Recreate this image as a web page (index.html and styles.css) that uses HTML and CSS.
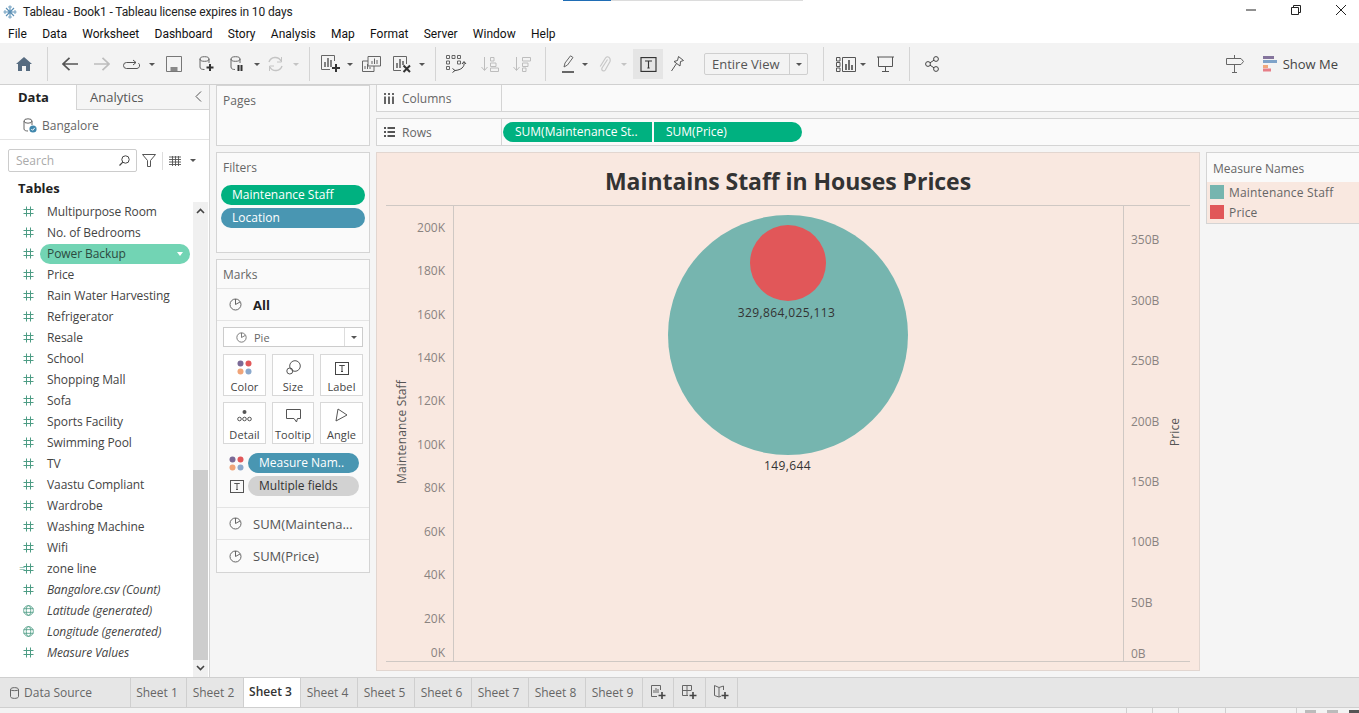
FILE: index.html
```html
<!DOCTYPE html>
<html>
<head>
    <title>Tableau - Book1</title>
    <link rel="stylesheet" href="styles.css">
</head>
<body>
    <!-- shared icons -->
    <svg class="defs" width="0" height="0">
        <symbol id="i-hash" viewBox="0 0 11 11"><path d="M3.5 0.5V10.5M7.5 0.5V10.5M0.5 3.5H10.5M0.5 7.5H10.5" fill="none" stroke="currentColor"/></symbol>
        <symbol id="i-globe" viewBox="0 0 12 12"><g fill="none" stroke="currentColor" stroke-width="0.9"><circle cx="6" cy="6" r="5.3"/><ellipse cx="6" cy="6" rx="2.4" ry="5.3"/><path d="M0.7 4H11.3M0.7 8H11.3"/></g></symbol>
        <symbol id="i-pie" viewBox="0 0 13 13"><g fill="none" stroke="currentColor"><circle cx="6.5" cy="6.5" r="5.5"/><path d="M6.5 1V6.5L11 4"/></g></symbol>
        <symbol id="i-dots" viewBox="0 0 15 15"><circle cx="3.5" cy="3.5" r="3" fill="#7b6a96"/><circle cx="11.5" cy="3.5" r="3" fill="#e15759"/><circle cx="3.5" cy="11.5" r="3" fill="#f0a478"/><circle cx="11.5" cy="11.5" r="3" fill="#8aa8cc"/></symbol>
        <symbol id="i-t" viewBox="0 0 14 13"><rect x="0.5" y="0.5" width="13" height="12" fill="none" stroke="currentColor"/><path d="M4.5 4V3.5H9.5V4M7 3.5V9.5M6 9.5H8" fill="none" stroke="currentColor"/></symbol>
    </svg>

    <header class="titlebar">
        <svg class="app-icon" width="14" height="14" viewBox="0 0 14 14"><g fill="none" stroke="#5a8fb5" stroke-width="1.1"><path d="M7 0.5V13.5M0.5 7H13.5M3 3L11 11M11 3L3 11"/><path d="M5 2H9M5 12H9M2 5V9M12 5V9" stroke="#7fa9c7"/></g></svg>
        <span class="app-title">Tableau - Book1 - Tableau license expires in 10 days</span>
        <div class="win-controls">
            <svg width="10" height="10" viewBox="0 0 10 10"><path d="M0 5H10" stroke="#222"/></svg>
            <svg width="10" height="10" viewBox="0 0 10 10"><path d="M0.5 2.5H7.5V9.5H0.5ZM2.5 2.5V0.5H9.5V7.5H7.5" fill="none" stroke="#222"/></svg>
            <svg width="10" height="10" viewBox="0 0 10 10"><path d="M0 0L10 10M10 0L0 10" stroke="#222"/></svg>
        </div>
        <div class="loading-strip"><span></span></div>
    </header>

    <nav class="menubar">
        <span>File</span><span>Data</span><span>Worksheet</span><span>Dashboard</span><span>Story</span><span>Analysis</span><span>Map</span><span>Format</span><span>Server</span><span>Window</span><span>Help</span>
    </nav>

    <div class="toolbar">
        <svg class="m16" width="16" height="14" viewBox="0 0 16 14"><path d="M8 0L16 7H14V14H10V9H6V14H2V7H0Z" fill="#566b80"/></svg>
        <i class="sep m15"></i>
        <svg class="m14" width="16" height="14" viewBox="0 0 16 14"><path d="M1 7H16M7.5 0.8L1 7L7.5 13.2" fill="none" stroke="#555" stroke-width="1.7"/></svg>
        <svg class="m16" width="16" height="14" viewBox="0 0 16 14"><path d="M0 7H15M8.5 0.8L15 7L8.5 13.2" fill="none" stroke="#bdbdbd" stroke-width="1.7"/></svg>
        <svg class="m13" width="18" height="11" viewBox="0 0 18 11"><path d="M3.5 3.5H13M3.5 3.5A3 3 0 0 0 3.5 9.5H14A3 3 0 0 0 15.5 4.2M10 1L13 3.5L10 6" fill="none" stroke="#555"/></svg>
        <i class="caret m8"></i>
        <svg class="m11" width="16" height="16" viewBox="0 0 16 16"><path d="M0.5 0.5H15.5V15.5H0.5Z" fill="none" stroke="#777"/><rect x="4.5" y="11" width="7" height="4" fill="#888"/></svg>
        <svg class="m17" width="15" height="16" viewBox="0 0 15 16"><g fill="none" stroke="#666"><ellipse cx="5.5" cy="3" rx="4.5" ry="2.3"/><path d="M1 3V11C1 13 3 13.5 5.5 13.5M10 3V7"/></g><path d="M11 8V15M7.5 11.5H14.5" stroke="#333" stroke-width="2"/></svg>
        <svg class="m16" width="14" height="16" viewBox="0 0 14 16"><g fill="none" stroke="#666"><ellipse cx="5.5" cy="3" rx="4.5" ry="2.3"/><path d="M1 3V11C1 13 3 13.5 5 13.5M10 3V7"/></g><path d="M8.5 9V15M11.5 9V15" stroke="#333" stroke-width="2"/></svg>
        <i class="caret m10"></i>
        <svg class="m7" width="17" height="16" viewBox="0 0 17 16"><path d="M2 6A6.5 6.5 0 0 1 14 5M15 10A6.5 6.5 0 0 1 3 11" fill="none" stroke="#c4c4c4" stroke-width="1.4"/><path d="M14.5 1V6H10M2.5 15V10H7" fill="none" stroke="#c4c4c4"/></svg>
        <i class="caret caret-off m9"></i>
        <i class="sep m10"></i>
        <svg class="m11" width="19" height="18" viewBox="0 0 19 18"><path d="M13.5 6V0.5H0.5V14.5H9" fill="none" stroke="#666"/><path d="M4 12V7M7 12V3M10 12V5" stroke="#666" stroke-width="1.6"/><path d="M15 9V17M11 13H19" stroke="#333" stroke-width="2"/></svg>
        <i class="caret m7"></i>
        <svg class="m9" width="19" height="16" viewBox="0 0 19 16"><g fill="none" stroke="#666"><path d="M6 10V0.5H18.5V10H6Z"/><path d="M6 5H0.5V15.5H12V10"/><path d="M10 8V5M12.5 8V2.5M15 8V4M3 13V10M5.5 13V8M8 13V11"/></g></svg>
        <svg class="m12" width="18" height="17" viewBox="0 0 18 17"><path d="M13.5 8V0.5H0.5V14.5H8" fill="none" stroke="#666"/><path d="M4 12V7M7 12V3M10 9V5" stroke="#666" stroke-width="1.6"/><path d="M10.5 9.5L17 16M17 9.5L10.5 16" stroke="#333" stroke-width="2"/></svg>
        <i class="caret m8"></i>
        <i class="sep m10"></i>
        <svg class="m10" width="21" height="18" viewBox="0 0 21 18"><g fill="none" stroke="#666"><path d="M0.5 0.5H3.5V3.5H0.5ZM6 0.5H9V3.5H6ZM11.5 0.5H14.5V3.5H11.5ZM0.5 6H3.5V9H0.5ZM0.5 11.5H3.5V14.5H0.5ZM11.5 6H14.5V9H11.5Z"/><path d="M18 7C19 12 15 15 9 15.5M6.5 13.5L9 15.5L6.5 17.5M16 9L18 6.5L20 9" stroke="#444"/></g></svg>
        <svg class="m14" width="18" height="16" viewBox="0 0 18 16"><g fill="none" stroke="#bdbdbd"><path d="M3.5 1V14M0.5 11L3.5 14.5L6.5 11"/><path d="M9.5 1.5H13V5H9.5ZM9.5 7H15V10.5H9.5ZM9.5 12H17.5V15.5H9.5Z"/></g></svg>
        <svg class="m14" width="18" height="16" viewBox="0 0 18 16"><g fill="none" stroke="#bdbdbd"><path d="M3.5 1V14M0.5 11L3.5 14.5L6.5 11"/><path d="M9.5 1.5H17.5V5H9.5ZM9.5 7H15V10.5H9.5ZM9.5 12H13V15.5H9.5Z"/></g></svg>
        <i class="sep m14"></i>
        <svg class="m16" width="12" height="18" viewBox="0 0 12 18"><path d="M2 12L3 8L8.5 0.8L11 2.5L5.5 10Z" fill="none" stroke="#666"/><path d="M0 17H12" stroke="#444" stroke-width="1.6"/></svg>
        <i class="caret m8"></i>
        <svg class="m11" width="12" height="18" viewBox="0 0 12 18"><path d="M8.5 4.5L3 13C2 15.5 5 17 6.3 15L11 6.5C12 3 8.5 0 6.5 3L1.2 11.5" fill="none" stroke="#c8c8c8" stroke-width="1.2"/></svg>
        <i class="caret caret-off m10"></i>
        <div class="tool-on m6">
            <svg width="17" height="15"><use href="#i-t"/></svg>
        </div>
        <svg class="m8" width="13" height="16" viewBox="0 0 13 16"><path d="M7.5 0.5L12.5 4.5L9.5 5.5L9 10L3 5.5L6.5 4.5ZM5.5 7.5L0.5 15" fill="none" stroke="#555"/></svg>
        <div class="fit-select m20">
            <span class="fit-text">Entire View</span>
            <span class="fit-arrow"><i class="caret"></i></span>
        </div>
        <i class="sep m15"></i>
        <svg class="m12" width="20" height="15" viewBox="0 0 20 15"><g fill="none" stroke="#555"><path d="M0.5 0.5H4V4H0.5ZM0.5 5.5H4V9.5H0.5ZM0.5 11H4V14.5H0.5ZM6.5 0.5H19.5V14.5H6.5Z"/></g><path d="M10 13V7M13 13V3M16 13V8" stroke="#555" stroke-width="1.7"/></svg>
        <i class="caret m4"></i>
        <svg class="m11" width="17" height="16" viewBox="0 0 17 16"><path d="M0 1H17M1.5 1V10.5H15.5V1M8.5 10.5V15.5M5 15.5H12" fill="none" stroke="#555"/></svg>
        <i class="sep m15"></i>
        <svg class="m15" width="14" height="16" viewBox="0 0 14 16"><g fill="none" stroke="#444"><circle cx="11" cy="3" r="2.4"/><circle cx="3" cy="8" r="2.4"/><circle cx="11" cy="13" r="2.4"/><path d="M5 6.8L9 4.2M5 9.2L9 11.8"/></g></svg>
        <div class="toolbar-right">
            <svg width="18" height="18" viewBox="0 0 18 18"><path d="M0.5 3.5H15L17.5 6.5L15 9.5H0.5ZM8.5 0V3.5M8.5 9.5V17.5M6 17.5H11" fill="none" stroke="#666"/></svg>
            <svg class="showme-icon" width="14" height="16" viewBox="0 0 14 16"><rect width="11" height="3" fill="#84749c"/><rect y="4" width="14" height="3" fill="#7fa3c9"/><rect y="9" width="5" height="3" fill="#f1a77c"/><rect y="12.5" width="8" height="3" fill="#e77e87"/></svg>
            <span class="showme-text">Show Me</span>
        </div>
    </div>

    <main class="workspace">
        <aside class="sidebar">
            <div class="side-tabs">
                <div class="side-tab side-tab-on">Data</div>
                <div class="side-tab">Analytics<svg class="side-collapse" width="7" height="11" viewBox="0 0 7 11"><path d="M6 0.5L1 5.5L6 10.5" fill="none" stroke="#555"/></svg></div>
            </div>
            <div class="source-row">
                <svg width="14" height="15" viewBox="0 0 14 15"><g fill="none" stroke="#666"><ellipse cx="5" cy="3" rx="4" ry="2.2"/><path d="M1 3V11C1 12.5 3 13 5 13M9 3V7"/></g><circle cx="10" cy="11" r="3.6" fill="#3f87ad"/><path d="M8.3 11L9.6 12.3L11.8 9.8" fill="none" stroke="#fff"/></svg>
                <span>Bangalore</span>
            </div>
            <div class="search-row">
                <div class="search-box">
                    <span>Search</span>
                    <svg width="11" height="11" viewBox="0 0 11 11"><circle cx="6.5" cy="4.5" r="3.7" fill="none" stroke="#444"/><path d="M3.8 7.2L0.5 10.5" stroke="#444" stroke-width="1.2"/></svg>
                </div>
                <svg class="search-funnel" width="14" height="13" viewBox="0 0 14 13"><path d="M0.5 0.5H13.5L8.5 6.5V12.5H5.5V6.5Z" fill="none" stroke="#555"/></svg>
                <i class="search-sep"></i>
                <svg width="12" height="10" viewBox="0 0 12 10"><path d="M0 1H12M0 3.5H12M0 6H12M0 8.5H12M3.5 0V10M6.5 0V10M9.5 0V10" fill="none" stroke="#555" stroke-width="0.9"/></svg>
                <i class="caret search-caret"></i>
            </div>
            <div class="tables-head">Tables</div>
            <div class="field-area">
                <ul class="field-list">
                    <li class="field"><svg class="f-ic"><use href="#i-hash"/></svg><span>Multipurpose Room</span></li>
                    <li class="field"><svg class="f-ic"><use href="#i-hash"/></svg><span>No. of Bedrooms</span></li>
                    <li class="field field-on"><svg class="f-ic"><use href="#i-hash"/></svg><span>Power Backup<i class="caret caret-white"></i></span></li>
                    <li class="field"><svg class="f-ic"><use href="#i-hash"/></svg><span>Price</span></li>
                    <li class="field"><svg class="f-ic"><use href="#i-hash"/></svg><span>Rain Water Harvesting</span></li>
                    <li class="field"><svg class="f-ic"><use href="#i-hash"/></svg><span>Refrigerator</span></li>
                    <li class="field"><svg class="f-ic"><use href="#i-hash"/></svg><span>Resale</span></li>
                    <li class="field"><svg class="f-ic"><use href="#i-hash"/></svg><span>School</span></li>
                    <li class="field"><svg class="f-ic"><use href="#i-hash"/></svg><span>Shopping Mall</span></li>
                    <li class="field"><svg class="f-ic"><use href="#i-hash"/></svg><span>Sofa</span></li>
                    <li class="field"><svg class="f-ic"><use href="#i-hash"/></svg><span>Sports Facility</span></li>
                    <li class="field"><svg class="f-ic"><use href="#i-hash"/></svg><span>Swimming Pool</span></li>
                    <li class="field"><svg class="f-ic"><use href="#i-hash"/></svg><span>TV</span></li>
                    <li class="field"><svg class="f-ic"><use href="#i-hash"/></svg><span>Vaastu Compliant</span></li>
                    <li class="field"><svg class="f-ic"><use href="#i-hash"/></svg><span>Wardrobe</span></li>
                    <li class="field"><svg class="f-ic"><use href="#i-hash"/></svg><span>Washing Machine</span></li>
                    <li class="field"><svg class="f-ic"><use href="#i-hash"/></svg><span>Wifi</span></li>
                    <li class="field field-calc"><svg class="f-ic"><use href="#i-hash"/></svg><span>zone line</span></li>
                    <li class="field field-gen"><svg class="f-ic"><use href="#i-hash"/></svg><span>Bangalore.csv (Count)</span></li>
                    <li class="field field-gen"><svg class="f-ic"><use href="#i-globe"/></svg><span>Latitude (generated)</span></li>
                    <li class="field field-gen"><svg class="f-ic"><use href="#i-globe"/></svg><span>Longitude (generated)</span></li>
                    <li class="field field-gen"><svg class="f-ic"><use href="#i-hash"/></svg><span>Measure Values</span></li>
                </ul>
                <div class="scrollbar">
                    <svg class="scroll-btn" width="15" height="18" viewBox="0 0 15 18"><path d="M4 11L7.5 7.5L11 11" fill="none" stroke="#444" stroke-width="1.6"/></svg>
                    <div class="scroll-thumb"></div>
                    <svg class="scroll-btn" width="15" height="17" viewBox="0 0 15 17"><path d="M4 6L7.5 9.5L11 6" fill="none" stroke="#444" stroke-width="1.6"/></svg>
                </div>
            </div>
        </aside>

        <section class="cards">
            <div class="card card-pages"><div class="card-title">Pages</div></div>
            <div class="card card-filters">
                <div class="card-title">Filters</div>
                <div class="pill pill-green pill-filter">Maintenance Staff</div>
                <div class="pill pill-blue pill-filter">Location</div>
            </div>
            <div class="card card-marks">
                <div class="card-title marks-title">Marks</div>
                <div class="marks-row marks-all"><svg width="13" height="13" class="pie-ic"><use href="#i-pie"/></svg><b>All</b></div>
                <div class="marks-body">
                    <div class="mark-select">
                        <svg width="11" height="11"><use href="#i-pie"/></svg>
                        <span>Pie</span>
                        <span class="mark-arrow"><i class="caret"></i></span>
                    </div>
                    <div class="mark-grid">
                        <div class="mark-btn"><svg width="15" height="15"><use href="#i-dots"/></svg>Color</div>
                        <div class="mark-btn"><svg width="15" height="15" viewBox="0 0 15 15"><g fill="none" stroke="#555"><circle cx="9" cy="6" r="5.3"/><circle cx="3.8" cy="11" r="3"/></g></svg>Size</div>
                        <div class="mark-btn"><svg width="14" height="13"><use href="#i-t"/></svg>Label</div>
                        <div class="mark-btn"><svg width="15" height="15" viewBox="0 0 15 15"><g fill="none" stroke="#555"><circle cx="2.5" cy="11" r="1.8"/><circle cx="7.5" cy="11" r="1.8"/><circle cx="12.5" cy="11" r="1.8"/></g><circle cx="7.5" cy="4" r="2" fill="#555"/></svg>Detail</div>
                        <div class="mark-btn"><svg width="15" height="15" viewBox="0 0 15 15"><path d="M0.5 1.5H14.5V10.5H11.5L10.5 14L8 10.5H0.5Z" fill="none" stroke="#555"/></svg>Tooltip</div>
                        <div class="mark-btn"><svg width="15" height="15" viewBox="0 0 15 15"><path d="M4 1L13 7L2 13Z" fill="none" stroke="#555"/></svg>Angle</div>
                    </div>
                    <div class="mark-pill"><svg width="15" height="15"><use href="#i-dots"/></svg><div class="pill pill-blue">Measure Nam..</div></div>
                    <div class="mark-pill"><svg width="14" height="13" class="mark-t"><use href="#i-t"/></svg><div class="pill pill-gray">Multiple fields</div></div>
                </div>
                <div class="marks-row marks-sum"><svg width="13" height="13" class="pie-ic"><use href="#i-pie"/></svg>SUM(Maintena...</div>
                <div class="marks-row marks-sum"><svg width="13" height="13" class="pie-ic"><use href="#i-pie"/></svg>SUM(Price)</div>
            </div>
        </section>

        <section class="sheet">
            <div class="shelf shelf-cols">
                <div class="shelf-label">
                    <svg width="10" height="11" viewBox="0 0 10 11"><path d="M1 0V2M1 3.5V11M5 0V2M5 3.5V11M9 0V2M9 3.5V11" stroke="#555" stroke-width="1.8"/></svg>
                    Columns
                </div>
            </div>
            <div class="shelf shelf-rows">
                <div class="shelf-label">
                    <svg width="11" height="10" viewBox="0 0 11 10"><path d="M0 1H2M3.5 1H11M0 5H2M3.5 5H11M0 9H2M3.5 9H11" stroke="#555" stroke-width="1.8"/></svg>
                    Rows
                </div>
                <div class="shelf-pills">
                    <div class="pill pill-green pill-left">SUM(Maintenance St..</div>
                    <div class="pill pill-green pill-right">SUM(Price)</div>
                </div>
            </div>
            <div class="sheet-body">
                <div class="view">
                    <h1 class="view-title">Maintains Staff in Houses Prices</h1>
                    <div class="plot">
                        <div class="axis axis-left">
                            <span class="axis-title">Maintenance Staff</span>
                            <span class="tick" style="top:22px">200K</span>
                            <span class="tick" style="top:65px">180K</span>
                            <span class="tick" style="top:109px">160K</span>
                            <span class="tick" style="top:152px">140K</span>
                            <span class="tick" style="top:195px">120K</span>
                            <span class="tick" style="top:239px">100K</span>
                            <span class="tick" style="top:282px">80K</span>
                            <span class="tick" style="top:326px">60K</span>
                            <span class="tick" style="top:369px">40K</span>
                            <span class="tick" style="top:413px">20K</span>
                            <span class="tick" style="top:447px">0K</span>
                        </div>
                        <div class="marks-area">
                            <div class="bubble bubble-teal"></div>
                            <div class="bubble bubble-red"></div>
                            <span class="mark-label label-price">329,864,025,113</span>
                            <span class="mark-label label-staff">149,644</span>
                        </div>
                        <div class="axis axis-right">
                            <span class="tick" style="top:34px">350B</span>
                            <span class="tick" style="top:95px">300B</span>
                            <span class="tick" style="top:155px">250B</span>
                            <span class="tick" style="top:216px">200B</span>
                            <span class="tick" style="top:276px">150B</span>
                            <span class="tick" style="top:336px">100B</span>
                            <span class="tick" style="top:397px">50B</span>
                            <span class="tick" style="top:448px">0B</span>
                            <span class="axis-title">Price</span>
                        </div>
                    </div>
                </div>
                <div class="legend">
                    <div class="legend-title">Measure Names</div>
                    <div class="legend-rows">
                        <div class="legend-row"><i class="swatch swatch-teal"></i>Maintenance Staff</div>
                        <div class="legend-row"><i class="swatch swatch-red"></i>Price</div>
                    </div>
                </div>
            </div>
        </section>
    </main>

    <footer class="tabbar">
        <div class="tab tab-source">
            <svg width="9" height="12" viewBox="0 0 9 12"><path d="M0.5 2.5C0.5 0 8.5 0 8.5 2.5V9.5C8.5 12 0.5 12 0.5 9.5ZM0.5 2.5C0.5 4 8.5 4 8.5 2.5" fill="none" stroke="#666"/></svg>
            Data Source
        </div>
        <div class="tab tab-sheet">Sheet 1</div>
        <div class="tab tab-sheet">Sheet 2</div>
        <div class="tab tab-sheet tab-on">Sheet 3</div>
        <div class="tab tab-sheet">Sheet 4</div>
        <div class="tab tab-sheet">Sheet 5</div>
        <div class="tab tab-sheet">Sheet 6</div>
        <div class="tab tab-sheet">Sheet 7</div>
        <div class="tab tab-sheet">Sheet 8</div>
        <div class="tab tab-sheet">Sheet 9</div>
        <div class="tab tab-new"><svg width="15" height="15" viewBox="0 0 15 15"><path d="M9.5 5V0.5H0.5V11.5H6" fill="none" stroke="#666"/><path d="M3 8V5M5 8V3M7 8V4" stroke="#666"/><path d="M11 7V14M7.5 10.5H14.5" stroke="#444" stroke-width="1.6"/></svg></div>
        <div class="tab tab-new"><svg width="15" height="15" viewBox="0 0 15 15"><path d="M9.5 5V0.5H0.5V10.5H6M0.5 5.5H9.5M5 0.5V10.5" fill="none" stroke="#666"/><path d="M11 7V14M7.5 10.5H14.5" stroke="#444" stroke-width="1.6"/></svg></div>
        <div class="tab tab-new"><svg width="15" height="15" viewBox="0 0 15 15"><path d="M9.5 5V1L5 2.5L0.5 0.5V10.5L5 12L7 11.2M5 2.5V12" fill="none" stroke="#666"/><path d="M11 7V14M7.5 10.5H14.5" stroke="#444" stroke-width="1.6"/></svg></div>
    </footer>

    <div class="statusbar">
        <i class="st-cell st-a"></i><i class="st-cell st-b"></i><i class="st-cell st-b"></i><i class="st-cell st-c"></i><i class="st-cell st-d"></i>
        <div class="st-icons"><i></i><i></i><i class="st-dark"></i></div>
    </div>
</body>
</html>
```

FILE: styles.css
```css
* {
    box-sizing: border-box;
}

html, body {
    height: 100%;
}

body {
    margin: 0;
    display: flex;
    flex-direction: column;
    overflow: hidden;
    background-color: #f5f5f5;
    color: #333;
    font-family: "Open Sans", Arial, sans-serif;
    font-size: 12px;
}

svg {
    display: block;
    flex: none;
}

i {
    display: block;
    flex: none;
}

.defs {
    position: absolute;
}

/* title + menu */
.titlebar {
    position: relative;
    flex: none;
    height: 24px;
    display: flex;
    align-items: center;
    padding-left: 3px;
    background-color: #fff;
    color: #222;
    font-family: Roboto, Arial, sans-serif;
}

.app-title {
    margin-left: 6px;
    letter-spacing: -0.12px;
}

.win-controls {
    margin-left: auto;
    display: flex;
    gap: 35px;
    padding: 0 13px 4px 0;
}

.loading-strip {
    position: absolute;
    top: 0;
    left: 563px;
    width: 240px;
    height: 1px;
    background-color: #dcdcdc;
}

.loading-strip span {
    display: block;
    width: 48px;
    height: 1px;
    background-color: #1f6db5;
}

.menubar {
    flex: none;
    height: 19px;
    display: flex;
    align-items: center;
    gap: 15.3px;
    padding-left: 8px;
    background-color: #fff;
    color: #111;
    font-family: Roboto, Arial, sans-serif;
}

/* toolbar */
.toolbar {
    flex: none;
    height: 42px;
    display: flex;
    align-items: center;
    padding-top: 1px;
    background-color: #f3f3f3;
    border-bottom: 1px solid #d0d0d0;
}

.m4 { margin-left: 4px; }
.m6 { margin-left: 6px; }
.m7 { margin-left: 7px; }
.m8 { margin-left: 8px; }
.m9 { margin-left: 9px; }
.m10 { margin-left: 10px; }
.m11 { margin-left: 11px; }
.m12 { margin-left: 12px; }
.m13 { margin-left: 13px; }
.m14 { margin-left: 14px; }
.m15 { margin-left: 15px; }
.m16 { margin-left: 16px; }
.m17 { margin-left: 17px; }
.m20 { margin-left: 20px; }

.sep {
    width: 1px;
    height: 34px;
    background-color: #d4d4d4;
}

.caret {
    width: 0;
    height: 0;
    border-left: 3px solid transparent;
    border-right: 3px solid transparent;
    border-top: 3px solid #555;
}

.caret-off {
    border-top-color: #c4c4c4;
}

.tool-on {
    width: 30px;
    height: 30px;
    display: flex;
    align-items: center;
    justify-content: center;
    background-color: #e5e5e5;
}

.fit-select {
    width: 104px;
    height: 22px;
    display: flex;
    align-items: center;
    border: 1px solid #cfcfcf;
    border-radius: 2px;
    color: #555;
    font-size: 13px;
}

.fit-text {
    flex: 1;
    padding-left: 7px;
}

.fit-arrow {
    width: 18px;
    height: 100%;
    display: flex;
    align-items: center;
    justify-content: center;
    border-left: 1px solid #cfcfcf;
}

.toolbar-right {
    margin-left: auto;
    display: flex;
    align-items: center;
    padding-right: 21px;
}

.showme-icon {
    margin-left: 19px;
}

.showme-text {
    margin-left: 6px;
    font-size: 13px;
    color: #444;
}

/* main area */
.workspace {
    flex: 1;
    min-height: 0;
    display: flex;
}

.sidebar {
    flex: none;
    width: 210px;
    display: flex;
    flex-direction: column;
    background-color: #fff;
    border-right: 1px solid #d4d4d4;
}

.side-tabs {
    flex: none;
    height: 25px;
    display: flex;
}

.side-tab {
    flex: 1;
    position: relative;
    padding: 3px 0 0 13px;
    background-color: #f5f5f5;
    border-bottom: 1px solid #d4d4d4;
    color: #555;
    font-size: 13px;
}

.side-tab-on {
    flex: none;
    width: 77px;
    padding-left: 18px;
    background-color: #fff;
    border-bottom: 0;
    border-right: 1px solid #d4d4d4;
    color: #222;
    font-weight: 700;
}

.side-collapse {
    position: absolute;
    top: 6px;
    right: 7px;
}

.source-row {
    flex: none;
    height: 30px;
    display: flex;
    align-items: center;
    gap: 5px;
    padding: 1px 0 0 23px;
    border-bottom: 1px solid #e4e4e4;
    color: #666;
}

.search-row {
    flex: none;
    height: 32px;
    display: flex;
    align-items: center;
    padding: 9px 0 0 8px;
}

.search-box {
    width: 129px;
    height: 23px;
    display: flex;
    align-items: center;
    justify-content: space-between;
    padding: 0 6px 0 7px;
    border: 1px solid #ccc;
    border-radius: 2px;
    color: #aaa;
}

.search-funnel {
    margin-left: 5px;
}

.search-sep {
    width: 1px;
    height: 18px;
    margin: 0 6px;
    background-color: #ddd;
}

.search-caret {
    margin-left: 9px;
}

.tables-head {
    flex: none;
    height: 30px;
    padding: 7px 0 0 18px;
    color: #222;
    font-size: 13px;
    font-weight: 700;
}

.field-area {
    flex: 1;
    min-height: 0;
    display: flex;
}

.field-list {
    flex: 1;
    margin: -1px 0 0;
    padding: 0;
    list-style: none;
    letter-spacing: -0.08px;
}

.field {
    position: relative;
    height: 21px;
    display: flex;
    align-items: center;
    color: #444;
}

.f-ic {
    width: 11px;
    height: 11px;
    margin: 0 13px 0 23px;
    color: #4d9c84;
}

.field-on span {
    position: relative;
    width: 150px;
    height: 20px;
    margin-left: -7px;
    padding-left: 7px;
    border-radius: 10px;
    background-color: #72d4b4;
    color: #2c4a40;
    line-height: 20px;
}

.caret-white {
    position: absolute;
    top: 8px;
    right: 7px;
    border-top-color: #fff;
    border-top-width: 4px;
}

.field-calc::before {
    content: "=";
    position: absolute;
    left: 19px;
    top: 2px;
    color: #4d9c84;
    font-size: 11px;
}

.field-gen span {
    font-style: italic;
}

.scrollbar {
    flex: none;
    width: 15px;
    margin-right: 1px;
    display: flex;
    flex-direction: column;
    justify-content: space-between;
    background-color: #f0f0f0;
}

.scroll-thumb {
    height: 190px;
    margin-top: auto;
    background-color: #cdcdcd;
}

/* pages, filters, marks */
.cards {
    flex: none;
    width: 154px;
    margin: 0 6px;
    display: flex;
    flex-direction: column;
    gap: 6px;
}

.card {
    background-color: #fafafa;
    border: 1px solid #d4d4d4;
    color: #555;
}

.card-title {
    padding: 6px 0 0 6px;
    color: #666;
}

.card-pages {
    height: 61px;
}

.card-filters {
    height: 101px;
}

.pill {
    height: 20px;
    padding-left: 11px;
    border-radius: 10px;
    color: #fff;
    line-height: 20px;
    white-space: nowrap;
}

.pill-green {
    background-color: #00b180;
}

.pill-blue {
    background-color: #4996b2;
}

.pill-gray {
    background-color: #d2d2d2;
    color: #333;
}

.pill-filter {
    margin: 0 4px 3px;
}

.card-filters .card-title {
    margin-bottom: 9px;
}

.card-marks {
    height: 314px;
}

.marks-title {
    height: 29px;
    border-bottom: 1px solid #e4e4e4;
}

.marks-row {
    display: flex;
    align-items: center;
    height: 32px;
    padding-left: 12px;
    border-bottom: 1px solid #e4e4e4;
    font-size: 13px;
}

.marks-row:last-child {
    border-bottom: 0;
}

.pie-ic {
    margin-right: 11px;
    color: #666;
}

.marks-all {
    color: #222;
}

.marks-body {
    height: 187px;
    padding: 6px 6px 0;
    border-bottom: 1px solid #e4e4e4;
}

.mark-select {
    height: 20px;
    display: flex;
    align-items: center;
    gap: 7px;
    padding-left: 12px;
    border: 1px solid #ccc;
    background-color: #fff;
    color: #666;
    font-size: 11px;
}

.mark-arrow {
    width: 18px;
    height: 100%;
    margin-left: auto;
    display: flex;
    align-items: center;
    justify-content: center;
    border-left: 1px solid #ddd;
}

.mark-grid {
    margin-top: 7px;
    display: grid;
    grid-template-columns: 43px 42px 43px;
    grid-auto-rows: 42px;
    gap: 6px;
}

.mark-btn {
    display: flex;
    flex-direction: column;
    align-items: center;
    justify-content: flex-end;
    gap: 4px;
    padding-bottom: 1px;
    border: 1px solid #d8d8d8;
    background-color: #fff;
    color: #444;
    font-size: 11px;
    letter-spacing: 0.1px;
}

.mark-pill {
    display: flex;
    align-items: center;
    height: 20px;
    margin-top: 3px;
    padding-left: 6px;
}

.mark-grid + .mark-pill {
    margin-top: 9px;
}

.mark-pill .pill {
    width: 111px;
    margin-left: 4px;
}

.mark-t {
    margin-left: 1px;
}

/* columns, rows, view */
.sheet {
    flex: 1;
    min-width: 0;
    display: flex;
    flex-direction: column;
}

.shelf {
    flex: none;
    display: flex;
    align-items: center;
    background-color: #fafafa;
    border: 1px solid #d4d4d4;
    border-width: 0 0 1px 1px;
}

.shelf-cols {
    height: 27px;
}

.shelf-rows {
    height: 28px;
    margin-top: 6px;
    border-top-width: 1px;
}

.shelf-label {
    width: 125px;
    height: 100%;
    display: flex;
    align-items: center;
    gap: 8px;
    padding-left: 7px;
    border-right: 1px solid #d4d4d4;
    color: #666;
}

.shelf-rows .shelf-label {
    gap: 7px;
}

.shelf-pills {
    display: flex;
    gap: 2px;
    padding-left: 1px;
}

.shelf-pills .pill {
    width: 149px;
    padding-left: 12px;
}

.shelf-pills .pill-right {
    width: 148px;
}

.pill-left {
    border-radius: 10px 0 0 10px;
}

.shelf-pills .pill-right {
    border-radius: 0 10px 10px 0;
}

.sheet-body {
    flex: 1;
    display: flex;
    gap: 6px;
    padding: 6px 0;
}

.view {
    flex: none;
    width: 824px;
    height: 519px;
    display: flex;
    flex-direction: column;
    padding: 0 9px 8px;
    background-color: #f9e8e0;
    border: 1px solid #e2d6d0;
}

.view-title {
    flex: none;
    height: 52px;
    margin: 0;
    text-align: center;
    color: #333;
    font-size: 23px;
    font-weight: 700;
    line-height: 56px;
    letter-spacing: -0.05px;
}

.plot {
    flex: 1;
    display: grid;
    grid-template-columns: 68px 1fr 67px;
    border-top: 1px solid #cfc8c4;
    border-bottom: 1px solid #cfc8c4;
}

.axis {
    position: relative;
    color: #8a8380;
}

.axis-left {
    border-right: 1px solid #cfc8c4;
}

.axis-right {
    border-left: 1px solid #cfc8c4;
}

.tick {
    position: absolute;
    transform: translateY(calc(-50% - 1px));
}

.axis-left .tick {
    right: 8px;
}

.axis-right .tick {
    left: 7px;
}

.axis-title {
    position: absolute;
    top: 226px;
    transform: translateY(-50%) rotate(180deg);
    writing-mode: vertical-rl;
    color: #555;
    letter-spacing: 0.15px;
}

.axis-left .axis-title {
    left: 7px;
}

.axis-right .axis-title {
    left: 42px;
}

.marks-area {
    position: relative;
}

.bubble {
    position: absolute;
    border-radius: 50%;
}

.bubble-teal {
    left: 214px;
    top: 9px;
    width: 240px;
    height: 240px;
    background-color: #76b5af;
}

.bubble-red {
    left: 296px;
    top: 19px;
    width: 76px;
    height: 76px;
    background-color: #e15759;
}

.mark-label {
    position: absolute;
    left: 0;
    right: 0;
    text-align: center;
    color: #333;
    letter-spacing: 0.4px;
}

.label-price {
    top: 98px;
    padding-right: 4px;
}

.label-staff {
    top: 251px;
    padding-right: 2px;
}

.legend {
    flex: 1;
    height: 72px;
    background-color: #fafafa;
    border: 1px solid #d4d4d4;
    border-right: 0;
}

.legend-title {
    height: 29px;
    padding: 7px 0 0 6px;
    color: #666;
}

.legend-rows {
    height: 41px;
    background-color: #f9e8e0;
}

.legend-row {
    height: 20px;
    display: flex;
    align-items: center;
    gap: 5px;
    padding-left: 3px;
    color: #666;
    letter-spacing: 0.18px;
}

.swatch {
    width: 14px;
    height: 14px;
}

.swatch-teal {
    background-color: #76b5af;
}

.swatch-red {
    background-color: #e15759;
}

/* sheet tabs */
.tabbar {
    flex: none;
    height: 31px;
    display: flex;
    background-color: #e6e6e6;
    border-top: 1px solid #cfcfcf;
    border-bottom: 1px solid #cfcfcf;
}

.tab {
    display: flex;
    align-items: center;
    justify-content: center;
    border-right: 1px solid #cfcfcf;
    color: #666;
}

.tab-source {
    width: 131px;
    justify-content: flex-start;
    gap: 5px;
    padding-left: 10px;
}

.tab-sheet {
    width: 57px;
    padding-right: 3px;
}

.tab-source + .tab-sheet {
    width: 56px;
}

.tab-on {
    padding-bottom: 2px;
    background-color: #fff;
    color: #333;
    font-weight: 600;
}

.tab-new {
    width: 32px;
}

.tab-sheet + .tab-new {
    width: 31px;
}

.statusbar {
    flex: none;
    height: 5px;
    display: flex;
    background-color: #f3f3f3;
}

.st-cell {
    height: 5px;
    border-right: 1px solid #cfcfcf;
}

.st-a { width: 1127px; }
.st-b { width: 26px; }
.st-c { width: 47px; }
.st-d { width: 71px; }

.st-icons {
    display: flex;
    gap: 11px;
    padding: 2px 0 0 8px;
}

.st-icons i {
    width: 11px;
    height: 3px;
    background-color: #bbb;
}

.st-icons .st-dark {
    background-color: #555;
}
```
